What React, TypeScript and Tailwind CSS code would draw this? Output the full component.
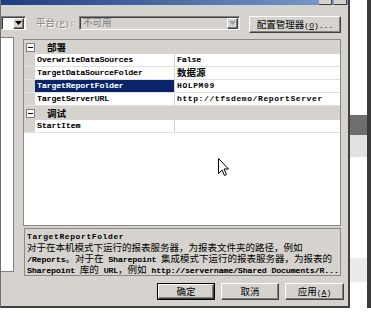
import React from "react"
import clsx from "clsx"

// CJK runs get their own span so the latin text can stay half-width
const CJK_RE = /([\u2E80-\u9FFF\u3000-\u303F\uFF00-\uFFEF]+)/

function Txt({ children, bold = false }: { children: string; bold?: boolean }) {
  const parts = children.split(CJK_RE)
  return (
    <span className="whitespace-pre">
      {parts.map((part, i) =>
        i % 2 === 1 ? (
          <span
            key={i}
            className={clsx("font-['Noto_Sans_CJK_SC',sans-serif] text-[9.5px]", bold && "font-bold")}
          >
            {part}
          </span>
        ) : part ? (
          <span
            key={i}
            className={clsx(
              "font-['Liberation_Mono',monospace] text-[8px]",
              bold ? "font-bold tracking-[0.6px]" : "[text-shadow:0.35px_0_0_currentColor]"
            )}
          >
            {part}
          </span>
        ) : null
      )}
    </span>
  )
}

const raised =
  "border border-t-white border-l-white border-r-[#404040] border-b-[#404040] shadow-[inset_-1px_-1px_0_#808080] bg-[#d6d3ce]"
const sunken =
  "border border-t-[#808080] border-l-[#808080] border-r-white border-b-white shadow-[inset_1px_1px_0_#404040]"

function Arrow({ disabled = false }: { disabled?: boolean }) {
  return (
    <div className={clsx("w-[11px] h-[11px] flex items-center justify-center", raised)}>
      <svg width="7" height="4" viewBox="0 0 7 4">
        <path d="M0 0h7L3.5 4z" fill={disabled ? "#a0a0a0" : "#000"} />
      </svg>
    </div>
  )
}

function Category({ label }: { label: string }) {
  return (
    <div className="flex h-[14px] bg-[#d6d3ce] items-center">
      <div className="w-[11px] flex items-center pl-[2px]">
        <div className="w-[9px] h-[9px] border border-[#808080] bg-white flex items-center justify-center">
          <div className="w-[5px] h-px bg-black" />
        </div>
      </div>
      <div className="pl-[12px] h-[14px] leading-[14px]">
        <Txt bold>{label}</Txt>
      </div>
    </div>
  )
}

interface PropRowProps {
  name: string
  value: string
  bold?: boolean
  selected?: boolean
}

function PropRow({ name, value, bold, selected }: PropRowProps) {
  return (
    <div className="flex h-[13px] border-b border-[#e2e0da] leading-[12px]">
      <div className="w-[11px] bg-[#d6d3ce]" />
      <div
        className={clsx(
          "w-[140px] pl-[2px] flex items-center border-r border-[#d6d3ce]",
          selected ? "bg-[#0a246a] text-white" : "text-black"
        )}
      >
        <Txt>{name}</Txt>
      </div>
      <div className="flex-1 pl-[2px] flex items-center text-black">
        <Txt bold={bold}>{value}</Txt>
      </div>
    </div>
  )
}

function DlgButton({ label, width, isDefault }: { label: React.ReactNode; width: string; isDefault?: boolean }) {
  return (
    <div className={clsx(width, "h-[17px] shrink-0", isDefault && "border border-black")}>
      <div className={clsx("w-full h-full flex items-center justify-center leading-[12px]", raised)}>
        {label}
      </div>
    </div>
  )
}

const descLines = [
  "对于在本机模式下运行的报表服务器，为报表文件夹的路径，例如",
  "/Reports。对于在 Sharepoint 集成模式下运行的报表服务器，为报表的",
  "Sharepoint 库的 URL，例如 http://servername/Shared Documents/R...",
]

export default function App() {
  return (
    <div className="relative w-[371px] h-[313px] bg-white overflow-hidden flex flex-col text-black font-['Liberation_Mono',monospace] text-[8px]">
      <div className="flex h-[308px]">
        {/* dialog */}
        <div className="w-[350px] flex flex-col bg-[#d6d3ce] border-l border-[#707070] border-r-2 border-r-[#404040] border-b-2 border-b-[#404040]">
          <div className="h-[5px] bg-linear-to-r from-[#1d3f7e] to-[#7d9fcf] flex justify-end gap-[2px] pr-[1px]">
            <div className="w-[13px] h-[5px] bg-[#d6d3ce] border-b border-r border-[#404040]" />
            <div className="w-[13px] h-[5px] bg-[#d6d3ce] border-b border-r border-[#404040]" />
          </div>

          {/* toolbar */}
          <div className="flex items-start mt-[11px] h-[17px]">
            <div className={clsx("w-[25px] h-[14px] bg-white flex items-center justify-end pr-px shrink-0", sunken)}>
              <Arrow />
            </div>
            <div className="ml-[10px] w-[38px] h-[14px] flex items-center text-[#808080] [text-shadow:1px_1px_0_#fff] leading-[12px] shrink-0">
              <span className="whitespace-pre">
                <Txt>平台</Txt>
                <span className="font-['Liberation_Mono',monospace] text-[8px]">
                  (<span className="underline">P</span>):
                </span>
              </span>
            </div>
            <div
              className={clsx(
                "ml-[5px] w-[161px] h-[14px] flex items-center justify-between pl-[3px] pr-px shrink-0",
                sunken
              )}
            >
              <span className="text-[#808080] leading-[12px]">
                <Txt>不可用</Txt>
              </span>
              <Arrow disabled />
            </div>
            <div className="ml-[9px]">
              <DlgButton
                width="w-[92px]"
                label={
                  <span className="whitespace-pre">
                    <Txt>配置管理器</Txt>
                    <span className="font-['Liberation_Mono',monospace] text-[8px]">
                      (<span className="underline">O</span>)...
                    </span>
                  </span>
                }
              />
            </div>
          </div>

          {/* body */}
          <div className="flex mt-[4px]">
            <div className="w-[13px] h-[235px] bg-white border-t border-r border-b border-[#808080]" />
            <div className="ml-[9px] flex flex-col">
              <div className="mt-[2px] w-[318px] h-[187px] border border-[#8a8a8a] bg-white flex flex-col">
                <Category label="部署" />
                <PropRow name="OverwriteDataSources" value="False" />
                <PropRow name="TargetDataSourceFolder" value="数据源" bold />
                <PropRow name="TargetReportFolder" value="HOLPM09" bold selected />
                <PropRow name="TargetServerURL" value="http://tfsdemo/ReportServer" bold />
                <Category label="调试" />
                <PropRow name="StartItem" value="" />
              </div>
              <div className="mt-[2px] ml-px w-[317px] h-[48px] border border-[#8a8a8a] bg-[#d6d3ce] pl-[2px] pt-[2px] flex flex-col">
                <div className="h-[11px] leading-[11px]">
                  <Txt bold>TargetReportFolder</Txt>
                </div>
                {descLines.map((line) => (
                  <div key={line} className="h-[11px] leading-[11px]">
                    <Txt>{line}</Txt>
                  </div>
                ))}
              </div>
            </div>
          </div>

          {/* buttons */}
          <div className="flex justify-end gap-[6px] mt-[7px] pr-[4px]">
            <DlgButton width="w-[58px]" label={<Txt>确定</Txt>} isDefault />
            <DlgButton width="w-[58px]" label={<Txt>取消</Txt>} />
            <DlgButton
              width="w-[59px]"
              label={
                <span className="whitespace-pre">
                  <Txt>应用</Txt>
                  <span className="font-['Liberation_Mono',monospace] text-[8px]">
                    (<span className="underline">A</span>)
                  </span>
                </span>
              }
            />
          </div>
        </div>

        {/* window behind */}
        <div className="flex-1 flex flex-col border-r-4 border-[#3a3a3a]">
          <div className="h-[115px] bg-white" />
          <div className="h-[20px] bg-[#6e6e6e]" />
          <div className="h-[22px] bg-[#e2e2e2]" />
          <div className="h-[101px] bg-white" />
          <div className="h-[24px] bg-[#ebebeb]" />
          <div className="flex-1 bg-white" />
        </div>
      </div>

      {/* mouse pointer */}
      <svg className="absolute left-[218px] top-[158px]" width="12" height="19" viewBox="0 0 12 19">
        <path d="M0.5 0.5V15.5L4 12L6.5 17.5L8.5 16.5L6 11H10.5Z" fill="#fff" stroke="#000" strokeWidth="1" />
      </svg>
    </div>
  )
}
